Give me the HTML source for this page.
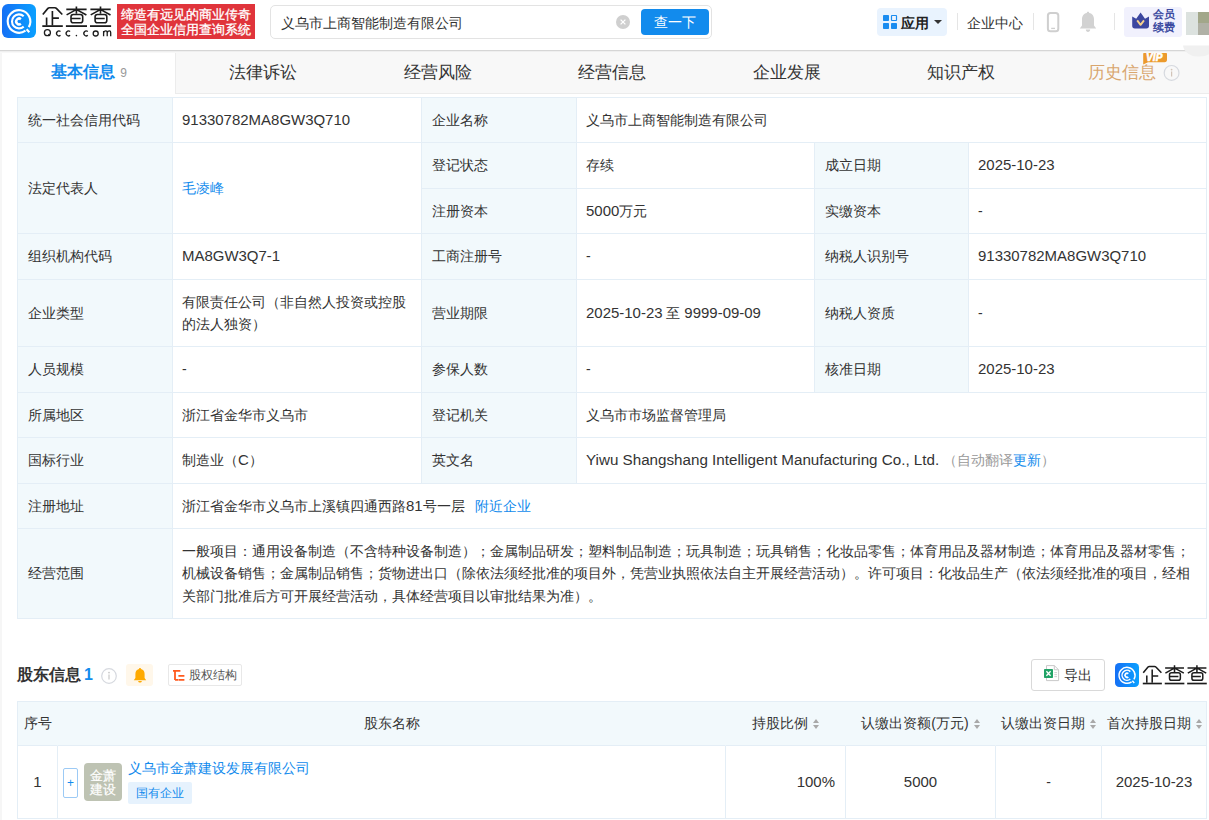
<!DOCTYPE html>
<html><head><meta charset="utf-8">
<style>
*{margin:0;padding:0;box-sizing:border-box;}
html,body{width:1209px;height:820px;overflow:hidden;background:#f6f6f6;font-family:"Liberation Sans",sans-serif;color:#333;font-size:14px;}
.abs{position:absolute;}
#hdr{position:absolute;left:0;top:0;width:1209px;height:50px;background:#fff;box-shadow:0 1px 0 #d6d6d6,0 2px 0 #efefef,0 3px 0 #f8f8f8;z-index:5;}
#card{position:absolute;left:2px;top:50px;width:1207px;height:770px;background:#fff;}
.tab{position:absolute;top:50px;height:44px;background:#f8f8f8;border-bottom:1px solid #ececec;font-size:16.5px;line-height:44px;text-align:center;color:#333;}
.tab.act{background:#fff;border:none;color:#128bed;font-weight:bold;font-size:16px;}
.c{position:absolute;border-right:1px solid #e4eef6;border-bottom:1px solid #e4eef6;display:flex;align-items:center;line-height:22.5px;white-space:nowrap;}
a{color:#128bed;text-decoration:none;}
.sort{display:inline-block;width:6px;height:10px;margin-left:5px;position:relative;top:1px;}
.sort:before{content:"";position:absolute;left:0;top:0;border-left:3px solid transparent;border-right:3px solid transparent;border-bottom:4px solid #a9a9a9;}
.sort:after{content:"";position:absolute;left:0;top:6px;border-left:3px solid transparent;border-right:3px solid transparent;border-top:4px solid #a9a9a9;}
.plus{position:absolute;left:5px;top:22px;width:15px;height:30px;border:1px solid #9ccaf5;border-radius:2px;color:#128bed;font-size:12px;line-height:28px;text-align:center;}
.jlogo{position:absolute;left:26px;top:17px;width:38px;height:38px;background:#bec3b3;border-radius:4px;color:#fff;font-size:13px;line-height:14px;text-align:center;padding-top:6px;white-space:normal;-webkit-text-stroke:0.2px #fff;}
.tag{width:64px;height:22px;background:#e6f2fd;color:#128bed;font-size:12px;line-height:22px;text-align:center;border-radius:2px;}
svg{position:absolute;overflow:visible;}
.n{font-size:1.07em;}
.en .n{font-size:1.085em;}
</style></head><body>
<svg width="0" height="0" style="left:0;top:0;">
<defs>
 <linearGradient id="qg" x1="0" y1="0" x2="1" y2="0"><stop offset="0" stop-color="#1570f5"/><stop offset="1" stop-color="#0aa0ff"/></linearGradient>
 <g id="qicon">
  <rect x="0" y="0" width="34" height="34" rx="6" fill="url(#qg)"/>
  <g fill="none" stroke="#fff" stroke-width="2.1">
   <path d="M26.8,23.1 A11.3,11.3 0 1 0 23.5,26.7"/>
   <path d="M24.6,25.2 L27.3,28.3"/>
   <path d="M21.7,12.2 A7,7 0 1 0 21.7,22.6"/>
   <path d="M18.89,15.16 A2.9,2.9 0 1 0 18.89,19.74" stroke-width="2.5"/>
  </g>
 </g>
 <g id="qtxt" fill="none" stroke="#1c1c1c" stroke-width="1.65">
  <path d="M42.8,14.5 L47.9,8.4 Q48.5,7.7 49.4,7.7 L54.9,7.7 Q55.8,7.7 56.4,8.4 L62.3,14.5"/>
  <path d="M52.4,11 V25.4 M52.4,18.1 H58.9 M46.6,17.6 V25.4"/>
  <path d="M42.3,26.1 H62.8" stroke-width="1.8"/>
  <g id="cha">
   <path d="M66.3,9.4 H86.6 M76.4,6.4 V13.8 M66.6,14.9 L76.2,9.6 M76.6,9.6 L86.4,15 M71,18.5 H80.6"/>
   <rect x="71" y="14.5" width="11.7" height="8.2" rx="2.3" stroke-width="1.6"/>
   <path d="M65.9,26.1 H87" stroke-width="1.8"/>
  </g>
  <use href="#cha" transform="translate(24.1,0)"/>
 </g>
</defs>
</svg>
<div id="hdr">
  <svg width="34" height="34" style="left:2px;top:4px;"><use href="#qicon"/></svg>
  <svg width="120" height="45" style="left:0;top:0;"><use href="#qtxt"/>
<g fill="none" stroke="#1c1c1c" stroke-width="1.3">
   <circle cx="47.4" cy="32.7" r="3"/><path d="M48.4,34.3 L49.9,35.9"/>
   <path d="M60.5,31.6 A2.4,2.4 0 1 0 60.5,35.3"/>
   <path d="M70.1,31.6 A2.4,2.4 0 1 0 70.1,35.3"/>
   <path d="M87.8,31.6 A2.4,2.4 0 1 0 87.8,35.3"/>
   <circle cx="95.7" cy="33.5" r="2.5"/>
   <path d="M103.6,36.3 V30.9 M103.6,32.6 Q104.4,30.9 105.8,30.9 Q107.2,30.9 107.2,32.6 V36.3 M107.2,32.6 Q108,30.9 109.3,30.9 Q110.7,30.9 110.7,32.6 V36.3"/>
  </g><circle cx="76.4" cy="35.6" r="0.8" fill="#1c1c1c"/></svg>
  <div class="abs" style="left:117px;top:4px;width:138px;height:35px;background:#e0343b;color:#fff;font-size:13px;line-height:15px;padding:3px 0 0 4px;letter-spacing:0;-webkit-text-stroke:0.3px #fff;">缔造有远见的商业传奇<br>全国企业信用查询系统</div>
  <!-- search -->
  <div class="abs" style="left:270px;top:5px;width:442px;height:34px;border:1px solid #e3e3e3;border-radius:5px;"></div>
  <div class="abs" style="left:281px;top:14px;font-size:14px;line-height:18px;color:#333;">义乌市上商智能制造有限公司</div>
  <svg width="16" height="16" style="left:615px;top:14px;"><circle cx="8" cy="8" r="7" fill="#cfcfcf"/><path d="M5.6,5.6 L10.4,10.4 M10.4,5.6 L5.6,10.4" stroke="#fff" stroke-width="1.3"/></svg>
  <div class="abs" style="left:641px;top:9px;width:68px;height:26px;border-radius:4px;background:#128bed;color:#fff;font-size:14px;line-height:26px;text-align:center;">查一下</div>
  <!-- right -->
  <div class="abs" style="left:877px;top:8px;width:70px;height:28px;border-radius:4px;background:#e9f3fe;"></div>
  <svg width="16" height="16" style="left:882px;top:14px;">
   <rect x="1" y="1" width="6" height="6" rx="0.8" fill="#1a8cf0"/>
   <rect x="9.5" y="1.5" width="5" height="5" rx="0.5" fill="#eef4fd" stroke="#1a8cf0" stroke-width="1.2"/>
   <rect x="1" y="9" width="6" height="6" rx="0.8" fill="#1a8cf0"/>
   <rect x="9" y="9" width="6" height="6" rx="0.8" fill="#1a8cf0"/>
  </svg>
  <div class="abs" style="left:901px;top:14px;font-size:14px;line-height:18px;font-weight:bold;color:#222;">应用</div>
  <svg width="10" height="6" style="left:933px;top:19px;"><path d="M1,1 H9 L5,5 Z" fill="#333"/></svg>
  <div class="abs" style="left:957px;top:13px;width:1px;height:17px;background:#e5e5e5;"></div>
  <div class="abs" style="left:967px;top:14px;font-size:14px;line-height:18px;color:#333;">企业中心</div>
  <div class="abs" style="left:1033px;top:13px;width:1px;height:17px;background:#e5e5e5;"></div>
  <svg width="14" height="22" style="left:1046px;top:11px;"><rect x="1.9" y="1.9" width="10.4" height="18.4" rx="2.6" fill="none" stroke="#cfcfcf" stroke-width="2"/><path d="M5.2,17.4 H9" stroke="#cfcfcf" stroke-width="1.3"/></svg>
  <svg width="18" height="22" style="left:1079px;top:11px;"><path d="M9,0.8 C9.9,0.8 10.2,1.4 10.2,1.9 C13.6,2.6 15,5.2 15,8.4 V14.4 L17.2,17.6 H0.8 L3,14.4 V8.4 C3,5.2 4.4,2.6 7.8,1.9 C7.8,1.4 8.1,0.8 9,0.8 Z M6.8,18.6 H11.2 C11.2,20 10.2,21 9,21 C7.8,21 6.8,20 6.8,18.6 Z" fill="#d2d2d2"/></svg>
  <div class="abs" style="left:1114px;top:13px;width:1px;height:17px;background:#e5e5e5;"></div>
  <div class="abs" style="left:1124px;top:7px;width:58px;height:30px;border-radius:3px;background:#f1f1fd;"></div>
  <svg width="18" height="17" style="left:1132px;top:12px;"><path d="M0.2,4.6 L4.2,6.8 L8.6,0.4 L13,6.8 L17,4.6 L17,13.8 Q17,16.4 14.4,16.4 L2.8,16.4 Q0.2,16.4 0.2,13.8 Z" fill="#3c47a0"/><path d="M5.2,8.4 L8.6,12.8 L12,8.4" fill="none" stroke="#f7d28c" stroke-width="1.9" stroke-linejoin="round"/></svg>
  <div class="abs" style="left:1153px;top:8px;font-size:11px;line-height:13px;font-weight:bold;color:#3b4aa0;">会员<br>续费</div>
  <div class="abs" style="left:1186px;top:12px;width:12px;height:23px;background:#dce2df;"></div>
  <div class="abs" style="left:1198px;top:12px;width:11px;height:11px;background:#a2a78a;"></div>
  <div class="abs" style="left:1198px;top:23px;width:11px;height:12px;background:#b0b1a6;"></div>
</div>
<div id="card"></div>
<div class="abs" style="left:1169px;top:36px;width:40px;height:21px;overflow:hidden;z-index:6;"><div class="abs" style="left:14px;top:-4.5px;width:32px;height:25px;border-radius:50%;background:#f0f0f0;clip-path:inset(14px 0 0 0);"></div></div>
<div class="tab act" style="left:2px;width:174px;">基本信息<span style="font-weight:normal;color:#999;font-size:12px;margin-left:5px;">9</span></div>
<div class="tab" style="left:175px;width:175px;border-left:1px solid #ececec;">法律诉讼</div>
<div class="tab" style="left:350px;width:175px;">经营风险</div>
<div class="tab" style="left:524px;width:175px;">经营信息</div>
<div class="tab" style="left:699px;width:175px;">企业发展</div>
<div class="tab" style="left:873px;width:175px;">知识产权</div>
<div class="tab" style="left:1048px;width:175px;color:#d9a66e;padding-right:28px;">历史信息</div>
<svg width="26" height="14" style="left:1142px;top:51px;"><path d="M3.2,0.5 H22.6 Q25,0.5 25,3 V8.6 Q25,11.2 22.6,11.2 H6 L1.2,13.6 L1.2,3 Q1.2,0.5 3.2,0.5 Z" fill="#ec9a2c"/><text x="4" y="9.6" font-family="Liberation Sans" font-size="10" font-weight="bold" font-style="italic" fill="#fff" stroke="#fff" stroke-width="0.6" letter-spacing="0.2">VIP</text></svg>
<svg width="18" height="18" style="left:1163px;top:64px;"><circle cx="8.6" cy="8.9" r="7.4" fill="none" stroke="#d6d9df" stroke-width="1.2"/><circle cx="8.6" cy="5.6" r="0.9" fill="#d2c4b8"/><path d="M8.6,7.6 V12.4" stroke="#d2c4b8" stroke-width="1.2"/></svg>

<div class="abs" style="left:17px;top:97px;width:1190px;height:1px;background:#e4eef6;"></div>
<div class="abs" style="left:17px;top:97px;width:1px;height:522px;background:#e4eef6;"></div>
<div class="c" style="left:18px;top:98px;width:155px;height:45px;background:#f2f9fc;padding-left:10px;"><div>统一社会信用代码</div></div>
<div class="c" style="left:173px;top:98px;width:249px;height:45px;background:#fff;padding-left:9px;"><div><span class="n">91330782MA8GW3Q710</span></div></div>
<div class="c" style="left:422px;top:98px;width:155px;height:45px;background:#f2f9fc;padding-left:10px;"><div>企业名称</div></div>
<div class="c" style="left:577px;top:98px;width:630px;height:45px;background:#fff;padding-left:9px;"><div>义乌市上商智能制造有限公司</div></div>
<div class="c" style="left:18px;top:143px;width:155px;height:91px;background:#f2f9fc;padding-left:10px;"><div>法定代表人</div></div>
<div class="c" style="left:173px;top:143px;width:249px;height:91px;background:#fff;padding-left:9px;"><div><a>毛凌峰</a></div></div>
<div class="c" style="left:422px;top:143px;width:155px;height:46px;background:#f2f9fc;padding-left:10px;"><div>登记状态</div></div>
<div class="c" style="left:577px;top:143px;width:238px;height:46px;background:#fff;padding-left:9px;"><div>存续</div></div>
<div class="c" style="left:815px;top:143px;width:154px;height:46px;background:#f2f9fc;padding-left:10px;"><div>成立日期</div></div>
<div class="c" style="left:969px;top:143px;width:238px;height:46px;background:#fff;padding-left:9px;"><div><span class="n">2025-10-23</span></div></div>
<div class="c" style="left:422px;top:189px;width:155px;height:45px;background:#f2f9fc;padding-left:10px;"><div>注册资本</div></div>
<div class="c" style="left:577px;top:189px;width:238px;height:45px;background:#fff;padding-left:9px;"><div><span class="n">5000</span>万元</div></div>
<div class="c" style="left:815px;top:189px;width:154px;height:45px;background:#f2f9fc;padding-left:10px;"><div>实缴资本</div></div>
<div class="c" style="left:969px;top:189px;width:238px;height:45px;background:#fff;padding-left:9px;"><div>-</div></div>
<div class="c" style="left:18px;top:234px;width:155px;height:46px;background:#f2f9fc;padding-left:10px;"><div>组织机构代码</div></div>
<div class="c" style="left:173px;top:234px;width:249px;height:46px;background:#fff;padding-left:9px;"><div><span class="n">MA8GW3Q7-1</span></div></div>
<div class="c" style="left:422px;top:234px;width:155px;height:46px;background:#f2f9fc;padding-left:10px;"><div>工商注册号</div></div>
<div class="c" style="left:577px;top:234px;width:238px;height:46px;background:#fff;padding-left:9px;"><div>-</div></div>
<div class="c" style="left:815px;top:234px;width:154px;height:46px;background:#f2f9fc;padding-left:10px;"><div>纳税人识别号</div></div>
<div class="c" style="left:969px;top:234px;width:238px;height:46px;background:#fff;padding-left:9px;"><div><span class="n">91330782MA8GW3Q710</span></div></div>
<div class="c" style="left:18px;top:280px;width:155px;height:67px;background:#f2f9fc;padding-left:10px;"><div>企业类型</div></div>
<div class="c" style="left:173px;top:280px;width:249px;height:67px;background:#fff;padding-left:9px;"><div>有限责任公司（非自然人投资或控股<br>的法人独资）</div></div>
<div class="c" style="left:422px;top:280px;width:155px;height:67px;background:#f2f9fc;padding-left:10px;"><div>营业期限</div></div>
<div class="c" style="left:577px;top:280px;width:238px;height:67px;background:#fff;padding-left:9px;"><div><span class="n">2025-10-23</span> 至 <span class="n">9999-09-09</span></div></div>
<div class="c" style="left:815px;top:280px;width:154px;height:67px;background:#f2f9fc;padding-left:10px;"><div>纳税人资质</div></div>
<div class="c" style="left:969px;top:280px;width:238px;height:67px;background:#fff;padding-left:9px;"><div>-</div></div>
<div class="c" style="left:18px;top:347px;width:155px;height:46px;background:#f2f9fc;padding-left:10px;"><div>人员规模</div></div>
<div class="c" style="left:173px;top:347px;width:249px;height:46px;background:#fff;padding-left:9px;"><div>-</div></div>
<div class="c" style="left:422px;top:347px;width:155px;height:46px;background:#f2f9fc;padding-left:10px;"><div>参保人数</div></div>
<div class="c" style="left:577px;top:347px;width:238px;height:46px;background:#fff;padding-left:9px;"><div>-</div></div>
<div class="c" style="left:815px;top:347px;width:154px;height:46px;background:#f2f9fc;padding-left:10px;"><div>核准日期</div></div>
<div class="c" style="left:969px;top:347px;width:238px;height:46px;background:#fff;padding-left:9px;"><div><span class="n">2025-10-23</span></div></div>
<div class="c" style="left:18px;top:393px;width:155px;height:45px;background:#f2f9fc;padding-left:10px;"><div>所属地区</div></div>
<div class="c" style="left:173px;top:393px;width:249px;height:45px;background:#fff;padding-left:9px;"><div>浙江省金华市义乌市</div></div>
<div class="c" style="left:422px;top:393px;width:155px;height:45px;background:#f2f9fc;padding-left:10px;"><div>登记机关</div></div>
<div class="c" style="left:577px;top:393px;width:630px;height:45px;background:#fff;padding-left:9px;"><div>义乌市市场监督管理局</div></div>
<div class="c" style="left:18px;top:438px;width:155px;height:46px;background:#f2f9fc;padding-left:10px;"><div>国标行业</div></div>
<div class="c" style="left:173px;top:438px;width:249px;height:46px;background:#fff;padding-left:9px;"><div>制造业（<span class="n">C</span>）</div></div>
<div class="c" style="left:422px;top:438px;width:155px;height:46px;background:#f2f9fc;padding-left:10px;"><div>英文名</div></div>
<div class="c" style="left:577px;top:438px;width:630px;height:46px;background:#fff;padding-left:9px;"><div><span class="en"><span class="n">Yiwu Shangshang Intelligent Manufacturing Co., Ltd.</span></span> <span style="color:#999;">（自动翻译<a>更新</a>）</span></div></div>
<div class="c" style="left:18px;top:484px;width:155px;height:45px;background:#f2f9fc;padding-left:10px;"><div>注册地址</div></div>
<div class="c" style="left:173px;top:484px;width:1034px;height:45px;background:#fff;padding-left:9px;"><div>浙江省金华市义乌市上溪镇四通西路<span class="n">81</span>号一层<a style="margin-left:10px;">附近企业</a></div></div>
<div class="c" style="left:18px;top:529px;width:155px;height:90px;background:#f2f9fc;padding-left:10px;"><div>经营范围</div></div>
<div class="c" style="left:173px;top:529px;width:1034px;height:90px;background:#fff;padding-left:9px;"><div>一般项目：通用设备制造（不含特种设备制造）；金属制品研发；塑料制品制造；玩具制造；玩具销售；化妆品零售；体育用品及器材制造；体育用品及器材零售；<br>机械设备销售；金属制品销售；货物进出口（除依法须经批准的项目外，凭营业执照依法自主开展经营活动）。许可项目：化妆品生产（依法须经批准的项目，经相<br>关部门批准后方可开展经营活动，具体经营项目以审批结果为准）。</div></div>

<!-- shareholders -->
<div class="abs" style="left:17px;top:665px;font-size:16px;line-height:20px;font-weight:bold;color:#333;">股东信息<span style="color:#128bed;margin-left:3px;font-size:16px;">1</span></div>
<svg width="18" height="18" style="left:100px;top:667px;"><circle cx="9" cy="9" r="7.3" fill="none" stroke="#d6d9df" stroke-width="1.2"/><circle cx="9" cy="5.6" r="0.9" fill="#c8c8c8"/><path d="M9,7.6 V12.6" stroke="#c8c8c8" stroke-width="1.2"/></svg>
<div class="abs" style="left:126px;top:664px;width:27px;height:22px;background:#fff7ea;border-radius:3px;"></div>
<svg width="14" height="16" style="left:133px;top:667px;"><path d="M7,1 C7.7,1 8,1.5 8,2 C10.5,2.5 11.6,4.6 11.6,7 V11 L13.2,13.2 H0.8 L2.4,11 V7 C2.4,4.6 3.5,2.5 6,2 C6,1.5 6.3,1 7,1 Z M5.2,14 H8.8 C8.8,15 8,15.6 7,15.6 C6,15.6 5.2,15 5.2,14 Z" fill="#ffaa00"/></svg>
<div class="abs" style="left:168px;top:664px;width:74px;height:22px;border:1px solid #e8e8e8;border-radius:2px;font-size:12px;line-height:20px;color:#555;padding-left:20px;">股权结构</div>
<svg width="14" height="12" style="left:172px;top:669px;"><path d="M1,1.8 H8.4 M3,2 V11 M3,10.8 H6" stroke="#ff5a1e" stroke-width="1.8" fill="none"/><path d="M6.4,6.8 H12.4 M6.4,10.8 H12.4" stroke="#ff5a1e" stroke-width="1.8"/></svg>
<div class="abs" style="left:1031px;top:659px;width:74px;height:32px;border:1px solid #d9d9d9;border-radius:3px;font-size:14px;line-height:30px;color:#333;padding-left:32px;">导出</div>
<svg width="16" height="17" style="left:1044px;top:665px;"><path d="M2.5,0.6 H10.3 L14.6,4.8 V15.6 H2.5 Z" fill="#fff" stroke="#c9c9c9" stroke-width="1"/><path d="M10.3,0.6 V4.8 H14.6" fill="none" stroke="#c9c9c9" stroke-width="1"/><path d="M10.4,7.6 H13 M10.4,9.6 H13 M10.4,11.6 H13" stroke="#c9c9c9" stroke-width="0.9"/><rect x="0" y="4" width="9" height="9" rx="0.8" fill="#21a366"/><path d="M2.4,6.2 L6.6,10.8 M6.6,6.2 L2.4,10.8" stroke="#fff" stroke-width="1.3"/></svg>
<svg width="24" height="24" style="left:1115px;top:663px;"><g transform="scale(0.7059)"><use href="#qicon"/></g></svg>
<svg width="70" height="24" style="left:1100px;top:660px;"><g transform="translate(42.8,5.2) scale(0.93) translate(-42.3,-6.4)"><use href="#qtxt"/></g></svg>

<div class="abs" style="left:17px;top:701px;width:1190px;height:1px;background:#e4eef6;"></div>
<div class="abs" style="left:17px;top:701px;width:1px;height:118px;background:#e4eef6;"></div>
<div class="c" style="left:18px;top:702px;width:40px;height:44px;background:#f2f9fc;padding:0;padding-left:6px;border-right-color:#f2f9fc"><div>序号</div></div>
<div class="c" style="left:58px;top:702px;width:668px;height:44px;background:#f2f9fc;padding:0;justify-content:center;border-right-color:#f2f9fc"><div>股东名称</div></div>
<div class="c" style="left:726px;top:702px;width:120px;height:44px;background:#f2f9fc;padding:0;justify-content:center;border-right-color:#f2f9fc"><div>持股比例<span class="sort"></span></div></div>
<div class="c" style="left:846px;top:702px;width:150px;height:44px;background:#f2f9fc;padding:0;justify-content:center;border-right-color:#f2f9fc"><div>认缴出资额(万元)<span class="sort"></span></div></div>
<div class="c" style="left:996px;top:702px;width:106px;height:44px;background:#f2f9fc;padding:0;justify-content:center;border-right-color:#f2f9fc"><div>认缴出资日期<span class="sort"></span></div></div>
<div class="c" style="left:1102px;top:702px;width:105px;height:44px;background:#f2f9fc;padding:0;justify-content:center;"><div>首次持股日期<span class="sort"></span></div></div>
<div class="c" style="left:18px;top:746px;width:40px;height:73px;background:#fff;padding:0;justify-content:center;"><div><span class="n">1</span></div></div>
<div class="c" style="left:58px;top:746px;width:668px;height:73px;background:#fff;padding:0;"><div><div class="plus">+</div><div class="jlogo">金萧<br>建设</div><div style="position:absolute;left:70px;top:13px;font-size:14px;line-height:18px;"><a>义乌市金萧建设发展有限公司</a></div><div class="tag" style="position:absolute;left:70px;top:36px;">国有企业</div></div></div>
<div class="c" style="left:726px;top:746px;width:120px;height:73px;background:#fff;padding:0;justify-content:flex-end;padding-right:10px;"><div><span class="n">100%</span></div></div>
<div class="c" style="left:846px;top:746px;width:150px;height:73px;background:#fff;padding:0;justify-content:center;"><div><span class="n">5000</span></div></div>
<div class="c" style="left:996px;top:746px;width:106px;height:73px;background:#fff;padding:0;justify-content:center;"><div>-</div></div>
<div class="c" style="left:1102px;top:746px;width:105px;height:73px;background:#fff;padding:0;justify-content:center;"><div><span class="n">2025-10-23</span></div></div>
</body></html>
